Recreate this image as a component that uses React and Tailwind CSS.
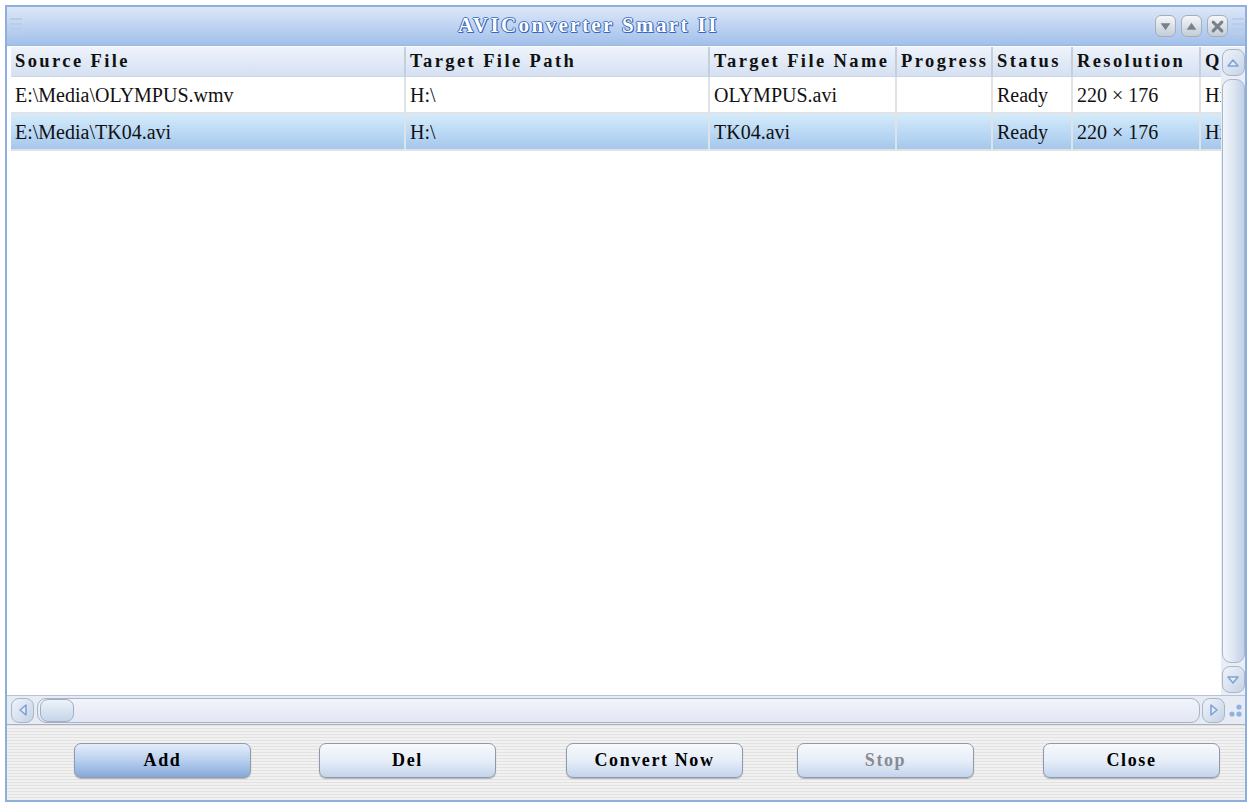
const serif = "font-['Liberation_Serif','DejaVu_Serif',serif]";

const columns = [
  { title: "Source File", w: "w-[395px]" },
  { title: "Target File Path", w: "w-[304px]" },
  { title: "Target File Name", w: "w-[187px]" },
  { title: "Progress", w: "w-[96px]" },
  { title: "Status", w: "w-[80px]" },
  { title: "Resolution", w: "w-[128px]" },
  { title: "Quality", w: "w-[60px]" },
];

const rows = [
  ["E:\\Media\\OLYMPUS.wmv", "H:\\", "OLYMPUS.avi", "", "Ready", "220 × 176", "High"],
  ["E:\\Media\\TK04.avi", "H:\\", "TK04.avi", "", "Ready", "220 × 176", "High"],
];

const Grip = () => (
  <div className="flex flex-col gap-[3px] w-[12px] py-[4px]">
    <div className="h-[2px] bg-[#b9cde9]" />
    <div className="h-[2px] bg-[#b9cde9]" />
    <div className="h-[2px] bg-[#b9cde9]" />
    <div className="h-[2px] bg-[#b9cde9]" />
  </div>
);

const TitleButton = ({ kind }) => (
  <div className="w-[21px] h-[22px] rounded-[6px] border border-[#a3aebd] bg-gradient-to-b from-[#f6f7f9] to-[#c4ccd7] flex items-center justify-center">
    <svg width="13" height="13" viewBox="0 0 12 12">
      {kind === "down" && <path d="M1.5 3 L10.5 3 L6 9.5 Z" fill="#79818b" />}
      {kind === "up" && <path d="M1.5 9 L10.5 9 L6 2.5 Z" fill="#79818b" />}
      {kind === "close" && <path d="M2 2 L10 10 M10 2 L2 10" stroke="#79818b" strokeWidth="2.8" strokeLinecap="round" />}
    </svg>
  </div>
);

const ArrowButton = ({ dir, className = "" }) => (
  <div className={`rounded-[8px] border border-[#a8b6c9] bg-gradient-to-br from-[#f0f4fa] to-[#c5d3e6] flex items-center justify-center ${className}`}>
    <svg width="14" height="14" viewBox="0 0 14 14">
      {dir === "up" && <path d="M2 10 L7 4 L12 10 Z" fill="#e4ecf8" stroke="#7fa3d6" strokeWidth="1.6" strokeLinejoin="round" />}
      {dir === "down" && <path d="M2 4 L7 10 L12 4 Z" fill="#e4ecf8" stroke="#7fa3d6" strokeWidth="1.6" strokeLinejoin="round" />}
      {dir === "left" && <path d="M10 2 L4 7 L10 12 Z" fill="#e4ecf8" stroke="#7fa3d6" strokeWidth="1.6" strokeLinejoin="round" />}
      {dir === "right" && <path d="M4 2 L10 7 L4 12 Z" fill="#e4ecf8" stroke="#7fa3d6" strokeWidth="1.6" strokeLinejoin="round" />}
    </svg>
  </div>
);

const Btn = ({ label, className = "", primary, disabled }) => (
  <div
    className={`w-[177px] h-[35px] rounded-[7px] border border-[#8f9aa8] shadow-[0_1px_1px_rgba(0,0,0,0.25)] flex items-center justify-center font-bold text-[18px] tracking-[1.6px] ${
      primary
        ? "bg-gradient-to-b from-[#e4eefa] via-[#b8cfee] to-[#86a9da]"
        : "bg-gradient-to-b from-[#f7f9fc] via-[#e7eef8] to-[#c3d4ec]"
    } ${disabled ? "text-[#878c93]" : "text-black"} ${className}`}
  >
    {label}
  </div>
);

export default function App() {
  return (
    <div className={`w-[1254px] h-[806px] bg-white pt-[5px] pl-[5px] ${serif}`}>
      <div className="w-[1242px] h-[797px] border-2 border-[#8eaede] flex flex-col bg-[#eef2f8]">
        {/* title bar */}
        <div className="h-[39px] flex items-center bg-gradient-to-b from-[#dde8f8] via-[#bed3f1] to-[#a2c0ea] border-b border-[#9ab5de]">
          <div className="ml-[3px]">
            <Grip />
          </div>
          <div className="ml-[436px] text-white font-bold text-[21px] tracking-[2.4px] [text-shadow:1px_0_0_#3867ba,-1px_0_0_#3867ba,0_1px_0_#3867ba,0_-1px_0_#4f7cc8,1px_1px_0_#3867ba]">
            AVIConverter Smart II
          </div>
          <div className="ml-auto flex items-center gap-[5px]">
            <TitleButton kind="down" />
            <TitleButton kind="up" />
            <TitleButton kind="close" />
          </div>
          <div className="ml-[4px] mr-[1px]">
            <Grip />
          </div>
        </div>

        {/* list + vertical scrollbar */}
        <div className="flex-1 flex pl-[4px] pt-[1px] bg-white">
          <div className="flex-1 overflow-hidden bg-white">
            <div className="flex h-[30px] bg-gradient-to-b from-[#eef3fb] to-[#d5e1f1] border-b border-[#c9d6e8]">
              {columns.map((c) => (
                <div key={c.title} className={`${c.w} shrink-0 border-r-2 border-[#c4cfdd] flex items-center pl-[4px] font-bold text-[18.5px] tracking-[2.4px] text-[#111] whitespace-nowrap overflow-hidden`}>
                  {c.title}
                </div>
              ))}
            </div>
            {rows.map((r, i) => (
              <div
                key={i}
                className={`flex h-[37px] border-b-2 border-[#dfe3e8] ${
                  i === 1 ? "bg-gradient-to-b from-[#d4ebfa] via-[#bcdaf5] to-[#a6c7ec]" : "bg-white"
                }`}
              >
                {r.map((v, j) => (
                  <div key={j} className={`${columns[j].w} shrink-0 border-r-2 border-[#dfe3e8] flex items-center pl-[4px] text-[20px] text-[#111] whitespace-nowrap overflow-hidden`}>
                    {v}
                  </div>
                ))}
              </div>
            ))}
          </div>
          <div className="w-[24px] flex flex-col items-center bg-[#e9eef6] py-[2px] gap-[3px]">
            <ArrowButton dir="up" className="w-[23px] h-[27px]" />
            <div className="w-[23px] flex-1 rounded-[9px] border border-[#a8b6c9] bg-gradient-to-r from-[#f3f6fb] via-[#dde6f3] to-[#c2d1e6]" />
            <ArrowButton dir="down" className="w-[23px] h-[27px]" />
          </div>
        </div>

        {/* horizontal scrollbar */}
        <div className="h-[29px] flex items-center pl-[4px] bg-[#e7ebf4] border-t border-[#b8c2d0]">
          <ArrowButton dir="left" className="w-[23px] h-[25px]" />
          <div className="flex-1 ml-[3px] h-[25px] rounded-[9px] border border-[#a8b3c4] bg-gradient-to-b from-[#f2f4fb] to-[#e2e6f3] flex">
            <div className="w-[34px] h-full rounded-[8px] border border-[#9fb0c6] bg-gradient-to-b from-[#eef3fa] to-[#c6d5ea] ml-[2px]" />
          </div>
          <ArrowButton dir="right" className="w-[23px] h-[25px] ml-[2px]" />
          <div className="w-[20px] h-[25px] flex items-end justify-end pr-[2px] pb-[2px]">
            <svg width="16" height="18" viewBox="0 0 16 18">
              <circle cx="12" cy="4" r="2.6" fill="#8fb2e3" />
              <circle cx="12" cy="11" r="2.6" fill="#8fb2e3" />
              <circle cx="5" cy="11" r="2.6" fill="#8fb2e3" />
            </svg>
          </div>
        </div>

        {/* button bar */}
        <div className="h-[76px] border-t border-[#a9b1bd] flex items-center pl-[67px] pb-[4px] bg-[image:repeating-linear-gradient(0deg,#f1f1f1_0px,#f1f1f1_2px,#e2e2e2_2px,#e2e2e2_3px)]">
          <Btn label="Add" primary />
          <Btn label="Del" className="ml-[68px]" />
          <Btn label="Convert Now" className="ml-[70px]" />
          <Btn label="Stop" className="ml-[54px]" disabled />
          <Btn label="Close" className="ml-[69px]" />
        </div>
      </div>
    </div>
  );
}
